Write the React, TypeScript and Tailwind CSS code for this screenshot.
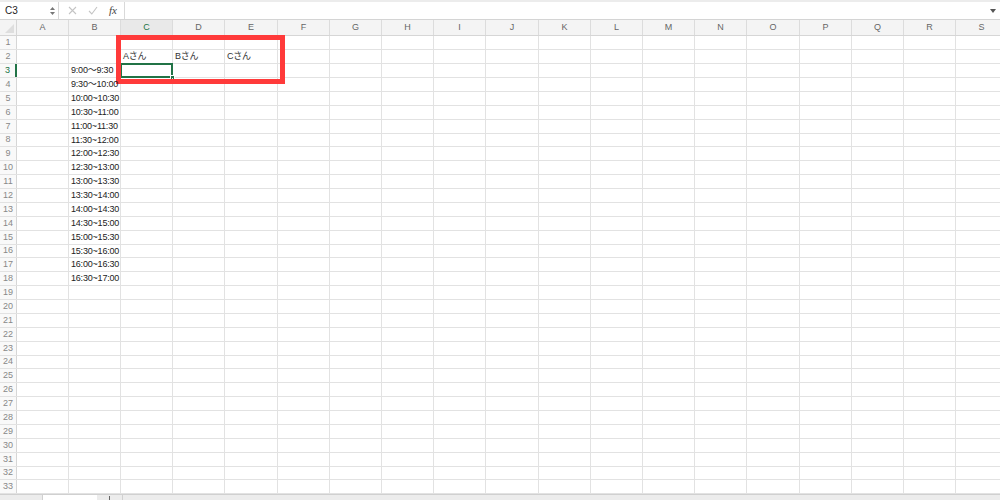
import React from "react";

const COLS = ["A","B","C","D","E","F","G","H","I","J","K","L","M","N","O","P","Q","R","S"];
const colW = (i: number) => (i % 5 === 4 ? "w-[53px]" : "w-[52px]");
const rowH = (i: number) => (i % 8 === 7 ? "h-[13px]" : "h-[14px]");

const times: Record<number, string> = {
  3: "9:00〜9:30",
  4: "9:30〜10:00",
  5: "10:00~10:30",
  6: "10:30~11:00",
  7: "11:00~11:30",
  8: "11:30~12:00",
  9: "12:00~12:30",
  10: "12:30~13:00",
  11: "13:00~13:30",
  12: "13:30~14:00",
  13: "14:00~14:30",
  14: "14:30~15:00",
  15: "15:00~15:30",
  16: "15:30~16:00",
  17: "16:00~16:30",
  18: "16:30~17:00",
};

const names: Record<string, string> = { C: "Aさん", D: "Bさん", E: "Cさん" };

export default function App() {
  const font = { fontFamily: '"Liberation Sans", "Noto Sans CJK JP", sans-serif' };
  return (
    <div className="w-[1000px] h-[500px] overflow-hidden relative bg-white flex flex-col text-[#222]" style={font}>
      {/* formula bar */}
      <div className="h-[20px] shrink-0 flex items-stretch border-t-[2px] border-[#ececec] border-b border-b-[#d4d4d4] bg-white">
        <div className="w-[59px] flex items-center justify-between pl-[5px] pr-[3px] border-r border-[#d9d9d9]">
          <span className="text-[10px]">C3</span>
          <div className="flex flex-col items-center gap-[2px]">
            <svg width="5" height="3" viewBox="0 0 5 3"><path d="M0 3 L2.5 0 L5 3Z" fill="#777" /></svg>
            <svg width="5" height="3" viewBox="0 0 5 3"><path d="M0 0 L2.5 3 L5 0Z" fill="#777" /></svg>
          </div>
        </div>
        <div className="w-[66px] flex items-center pl-[9px] gap-[11px] border-r border-[#d9d9d9]">
          <svg width="9" height="9" viewBox="0 0 9 9"><path d="M1 1 L8 8 M8 1 L1 8" stroke="#c4c4c4" strokeWidth="1.1" /></svg>
          <svg width="10" height="9" viewBox="0 0 10 9"><path d="M1 5 L3.8 8 L9 1" stroke="#c4c4c4" strokeWidth="1.1" fill="none" /></svg>
          <span className="text-[11px] italic text-[#444]" style={{ fontFamily: '"Liberation Serif", serif' }}>fx</span>
        </div>
        <div className="flex-1 flex items-center justify-end pr-[4px]">
          <svg width="6" height="4" viewBox="0 0 6 4"><path d="M0 0 L3 4 L6 0Z" fill="#555" /></svg>
        </div>
      </div>

      {/* column headers */}
      <div className="h-[16px] shrink-0 flex bg-[#f4f4f4] border-b border-[#d6d6d6]">
        <div className="w-[17px] shrink-0 border-r border-[#d6d6d6] relative">
          <svg className="absolute right-[2px] bottom-[2px]" width="9" height="9" viewBox="0 0 9 9"><path d="M9 0 L9 9 L0 9Z" fill="#dedede" /></svg>
        </div>
        {COLS.map((c, i) => (
          <div
            key={c}
            className={`${colW(i)} shrink-0 border-r border-[#dcdcdc] flex items-center justify-center text-[9px] ${c === "C" ? "text-[#217346] bg-[#e9e9e9]" : "text-[#666]"}`}
          >
            {c}
          </div>
        ))}
      </div>

      {/* rows */}
      <div className="flex flex-col shrink-0">
        {Array.from({ length: 33 }, (_, ri) => {
          const r = ri + 1;
          return (
            <div key={r} className={`${rowH(ri)} flex shrink-0 border-b border-[#e2e2e2]`}>
              <div
                className={`w-[17px] shrink-0 flex items-center justify-center text-[9px] bg-[#f9f9f9] ${r === 3 ? "text-[#217346] border-r-2 border-[#217346]" : "text-[#888] border-r border-[#d6d6d6]"}`}
              >
                {r}
              </div>
              {COLS.map((c, i) => (
                <div key={c} className={`${colW(i)} shrink-0 border-r border-[#e2e2e2] relative flex items-center pl-[2px] text-[9px] tracking-[-0.2px] leading-none whitespace-nowrap`}>
                  {c === "B" && times[r] ? <span className="relative z-10">{times[r]}</span> : null}
                  {r === 2 && names[c] ? <span className="text-[#333]">{names[c]}</span> : null}
                  {r === 3 && c === "C" ? (
                    <div className="absolute left-[-1px] top-[-1px] w-[53px] h-[15px] border-2 border-[#217346]">
                      <div className="absolute right-[-4px] bottom-[-4px] w-[5px] h-[5px] bg-[#217346] border border-white" />
                    </div>
                  ) : null}
                </div>
              ))}
            </div>
          );
        })}
      </div>

      {/* sheet tabs */}
      <div className="flex-1 flex bg-[#ececec] border-t border-[#d0d0d0]">
        <div className="w-[43px] border-r border-[#d0d0d0]" />
        <div className="w-[54px] bg-white" />
        <div className="w-[26px] border-r border-[#d0d0d0] relative">
          <div className="absolute left-[12px] top-[1px] w-[1px] h-[6px] bg-[#666]" />
        </div>
      </div>

      {/* red highlight */}
      <div className="absolute left-[116px] top-[35px] w-[169px] h-[49px] border-[5px] border-[#ff3a3a]" />
    </div>
  );
}
